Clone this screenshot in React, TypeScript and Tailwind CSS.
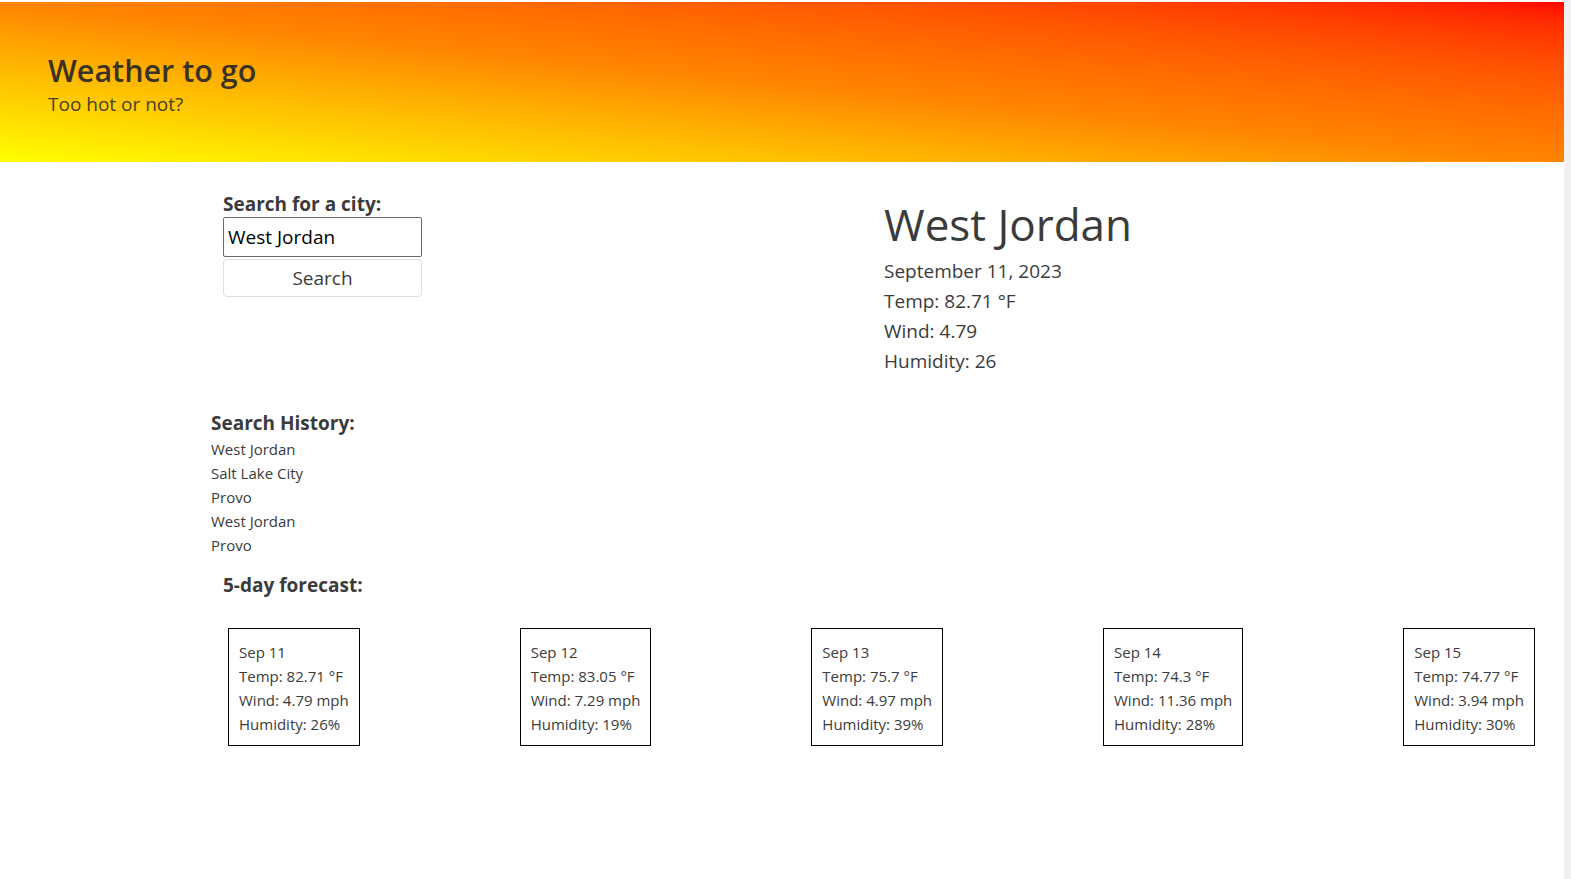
import React from "react";

const HISTORY = ["West Jordan", "Salt Lake City", "Provo", "West Jordan", "Provo"];

const FORECAST = [
  { day: "Sep 11", temp: "82.71", wind: "4.79", hum: "26" },
  { day: "Sep 12", temp: "83.05", wind: "7.29", hum: "19" },
  { day: "Sep 13", temp: "75.7", wind: "4.97", hum: "39" },
  { day: "Sep 14", temp: "74.3", wind: "11.36", hum: "28" },
  { day: "Sep 15", temp: "74.77", wind: "3.94", hum: "30" },
];

export default function App() {
  return (
    <div className="flex min-h-[879px] bg-white font-['Open_Sans',sans-serif] text-[#3b3b3b]">
      <div className="w-[1564px] shrink-0">
        {/* Header */}
        <header className="mt-[2px] h-[160px] bg-gradient-to-tr from-[#ffff00] via-[#ff8400] to-[#ff0000] pl-[48px] pt-[48px]">
          <h1 className="text-[30.5px] font-semibold leading-[40px] text-[#3a3226]">Weather to go</h1>
          <p className="text-[19px] leading-[28px] text-[#4a4030]">Too hot or not?</p>
        </header>

        {/* Search + current */}
        <div className="flex pt-[29px]">
          <div className="ml-[223px] w-[199px] pt-[1px]">
            <label className="block text-[19px] font-bold leading-[24px]">Search for a city:</label>
            <input
              defaultValue="West Jordan"
              className="mt-[1px] block h-[40px] w-[199px] rounded-[2px] border border-[#6b6b6b] px-[4px] text-[19px] text-black outline-none"
            />
            <button className="mt-[2px] block h-[38px] w-[199px] rounded-[4px] border border-[#dedede] bg-white text-[19px] text-[#3b3b3b]">
              Search
            </button>
          </div>
          <div className="ml-[462px] pt-[4px]">
            <h2 className="text-[44px] leading-[58px]">West Jordan</h2>
            <div className="mt-[3px] text-[19px] leading-[30px]">
              <p>September 11, 2023</p>
              <p>Temp: 82.71 °F</p>
              <p>Wind: 4.79</p>
              <p>Humidity: 26</p>
            </div>
          </div>
        </div>

        {/* History */}
        <div className="ml-[211px] mt-[35px]">
          <h3 className="text-[19px] font-bold leading-[24px]">Search History:</h3>
          <ul className="mt-[2px] text-[15px] leading-[24px]">
            {HISTORY.map((c, i) => (
              <li key={i}>{c}</li>
            ))}
          </ul>
        </div>

        {/* Forecast */}
        <h3 className="ml-[223px] mt-[16px] text-[19px] font-bold leading-[24px]">5-day forecast:</h3>
        <div className="ml-[228px] mr-[29px] mt-[31px] flex justify-between">
          {FORECAST.map((f) => (
            <div key={f.day} className="border border-black px-[10px] pt-[11px] pb-[9px] text-[15px] leading-[24px]">
              <p>{f.day}</p>
              <p>Temp: {f.temp} °F</p>
              <p>Wind: {f.wind} mph</p>
              <p>Humidity: {f.hum}%</p>
            </div>
          ))}
        </div>
      </div>
      <div className="w-[7px] shrink-0 bg-[#f1f1f1]" />
    </div>
  );
}
